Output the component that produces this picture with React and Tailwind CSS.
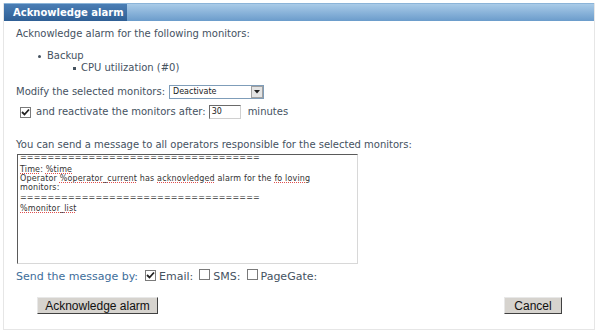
import React from "react";

function Check({ checked }) {
  return (
    <span className="inline-flex w-[11px] h-[11px] border border-[#7a7a7a] bg-white items-center justify-center shrink-0">
      {checked && (
        <svg width="9" height="9" viewBox="0 0 9 9">
          <path d="M1 4 L3.5 6.5 L8 1.5" stroke="#222" strokeWidth="1.8" fill="none" />
        </svg>
      )}
    </span>
  );
}

function Squiggle({ children }) {
  return (
    <span className="underline decoration-dotted decoration-[#e05050] decoration-1 underline-offset-1">
      {children}
    </span>
  );
}

export default function App() {
  return (
    <div
      className="w-[602px] h-[334px] bg-white text-[10px] text-[#45525f] pt-[3px]"
      style={{ fontFamily: "'DejaVu Sans', Verdana, sans-serif" }}
    >
      <div className="ml-[3px] w-[592px] h-[327px] border border-[#e6e6e6] border-t-0 flex flex-col">
        {/* header */}
        <div className="h-[18px] flex bg-gradient-to-b from-[#a9cbe8] to-[#6b9ccb] border-t border-[#8bb4d8]">
          <div className="h-full w-[123px] bg-gradient-to-b from-[#4a7eb5] to-[#2f5f95] text-white font-bold text-[10px] whitespace-nowrap flex items-center pl-[9px]">
            Acknowledge alarm
          </div>
        </div>

        <div className="pl-[12px] pt-[6px] flex flex-col">
          <div className="leading-[13px]">Acknowledge alarm for the following monitors:</div>

          <div className="mt-[10px] pl-[22px] leading-[12px]">
            <div className="flex items-center gap-[6px]">
              <span className="w-[3px] h-[3px] rounded-full bg-[#45525f]" />
              <span>Backup</span>
            </div>
            <div className="flex items-center gap-[5px] pl-[35px]">
              <span className="w-[3px] h-[3px] bg-[#45525f]" />
              <span>CPU utilization (#0)</span>
            </div>
          </div>

          <div className="mt-[11px] flex items-center gap-[4px] leading-[14px]">
            <span>Modify the selected monitors:</span>
            <div className="w-[95px] h-[14px] border border-[#7f9db9] flex items-center bg-white">
              <span className="flex-1 pl-[3px] text-[8px] text-[#222]">Deactivate</span>
              <span className="w-[12px] h-[12px] bg-[#e4e4e4] border border-[#a0a0a0] flex items-center justify-center">
                <svg width="6" height="4" viewBox="0 0 6 4">
                  <path d="M0 0 H6 L3 3.5Z" fill="#222" />
                </svg>
              </span>
            </div>
          </div>

          <div className="mt-[6px] flex items-center pl-[4px] leading-[14px]">
            <Check checked />
            <span className="ml-[5px]">and reactivate the monitors after:</span>
            <span className="ml-[3px] w-[32px] h-[14px] border border-[#6a6a6a] border-r-[#d0d0d0] border-b-[#d0d0d0] pl-[2px] text-[8px] text-[#222] flex items-center bg-white">
              30
            </span>
            <span className="ml-[7px]">minutes</span>
          </div>

          <div className="mt-[19px] leading-[13px]">
            You can send a message to all operators responsible for the selected monitors:
          </div>

          <div className="mt-[3px] ml-[1px] w-[341px] h-[110px] overflow-hidden border border-[#5a5a5a] border-r-[#d8d8d8] border-b-[#d8d8d8] bg-white pl-[2px] text-[8px] leading-[9px] tracking-[0.15px] text-[#333]">
            <div className="-mt-[2px] whitespace-nowrap">===================================</div>
            <div className="mt-[3px]">
              <Squiggle>Time</Squiggle>: <Squiggle>%time</Squiggle>
            </div>
            <div>
              Operator <Squiggle>%operator_current</Squiggle> has <Squiggle>acknovledged</Squiggle> alarm for the{" "}
              <Squiggle>fo loving</Squiggle>
            </div>
            <div>monitors:</div>
            <div className="mt-[1px] whitespace-nowrap">===================================</div>
            <div className="mt-[2px]">
              <Squiggle>%monitor_list</Squiggle>
            </div>
          </div>

          <div className="mt-[5px] flex items-center text-[11px] leading-[13px]">
            <span className="text-[#3d6d9a]">Send the message by:</span>
            <span className="ml-[7px]"><Check checked /></span>
            <span className="ml-[3px]">Email:</span>
            <span className="ml-[6px]"><Check /></span>
            <span className="ml-[3px]">SMS:</span>
            <span className="ml-[6px]"><Check /></span>
            <span className="ml-[3px]">PageGate:</span>
          </div>

          <div
            className="mt-[14px] flex items-center justify-between pl-[21px] pr-[32px] text-[12px] text-[#111]"
            style={{ fontFamily: "'Liberation Sans', Arial, sans-serif" }}
          >
            <button className="w-[121px] h-[17px] bg-[#d6d3ce] border border-[#e8e8e8] border-r-[#404040] border-b-[#404040] leading-none">
              Acknowledge alarm
            </button>
            <button className="w-[58px] h-[17px] bg-[#d6d3ce] border border-[#e8e8e8] border-r-[#404040] border-b-[#404040] leading-none">
              Cancel
            </button>
          </div>
        </div>
      </div>
    </div>
  );
}
